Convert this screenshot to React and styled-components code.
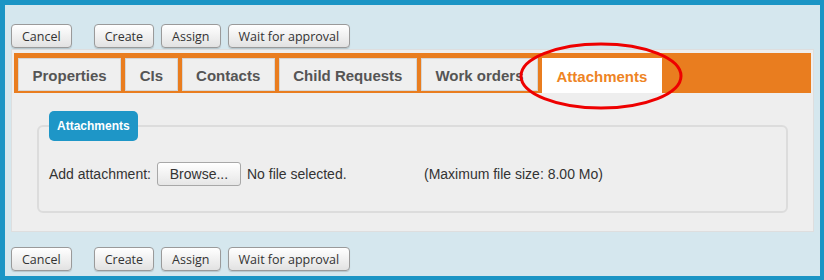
import React from 'react'
import styled, { createGlobalStyle } from 'styled-components'

const GlobalStyle = createGlobalStyle`
  html, body { margin: 0; padding: 0; background: #d5e7ee; }
  * { box-sizing: border-box; }
`

const Frame = styled.div`
  position: relative;
  width: 824px;
  height: 280px;
  background: #d5e7ee;
  border-style: solid;
  border-color: #1b95c5;
  border-width: 5px 4px 4px 5px;
  padding: 19px 6px 0 6px;
  font-family: "Liberation Sans", Arial, sans-serif;
  color: #333;
`

const ButtonBar = styled.div`
  display: flex;
  gap: 7px;
  height: 24px;
`

const ActionButton = styled.button`
  height: 24px;
  padding: 0 10px;
  margin-right: ${p => (p.$spaced ? '15px' : '0')};
  font-family: "Open Sans", "DejaVu Sans", sans-serif;
  font-size: 12.5px;
  color: #333;
  background: linear-gradient(#ffffff, #e2e2e2);
  border: 1px solid #9a9a9a;
  border-radius: 4px;
  box-shadow: 0 1px 1px rgba(0, 0, 0, 0.15);
  cursor: pointer;
`

const Panel = styled.div`
  margin: 1px 0 15px 0;
  width: 803px;
  height: 183px;
  background: #eeeeee;
  border: 1px solid #dedede;
  padding: 3px 2px 0 2px;
`

const TabBar = styled.div`
  display: flex;
  gap: 4px;
  height: 40px;
  background: #e97d1f;
  padding: 5px 4px 0 4px;
`

const Tab = styled.div`
  height: ${p => (p.$active ? '35px' : '33px')};
  padding: 1px ${p => (p.$active ? '14.5px' : '13.5px')} 0;
  display: flex;
  align-items: center;
  font-size: 15px;
  font-weight: bold;
  color: ${p => (p.$active ? '#ee8424' : '#555')};
  background: ${p => (p.$active ? '#ffffff' : '#efefef')};
  border: ${p => (p.$active ? 'none' : '1px solid #d6d6d6')};
`

const Content = styled.div`
  padding: 18px 23px 0 23px;
`

const Fieldset = styled.fieldset`
  margin: 0;
  height: 102px;
  padding: 0 10px 0 10px;
  border: 2px solid #dcdcdc;
  border-radius: 6px;
`

const Legend = styled.legend`
  height: 30px;
  padding: 0 8px;
  line-height: 30px;
  background: #1e96c7;
  color: #ffffff;
  font-size: 12px;
  font-weight: bold;
  border-radius: 5px;
`

const FileRow = styled.div`
  display: flex;
  align-items: center;
  margin-top: 21px;
  font-size: 14px;
`

const FileCell = styled.div`
  display: flex;
  align-items: center;
  gap: 6px;
  width: 375px;
`

const BrowseButton = styled.button`
  height: 24px;
  width: 84px;
  padding: 0;
  font-family: "Liberation Sans", Arial, sans-serif;
  font-size: 14px;
  color: #333;
  background: linear-gradient(#ffffff, #e6e6e6);
  border: 1px solid #a8a8a8;
  border-radius: 3px;
`

const Highlight = styled.svg`
  position: absolute;
  left: -5px;
  top: -5px;
  pointer-events: none;
`

const tabs = ['Properties', 'CIs', 'Contacts', 'Child Requests', 'Work orders', 'Attachments']

const Buttons = () => (
  <ButtonBar>
    <ActionButton $spaced>Cancel</ActionButton>
    <ActionButton>Create</ActionButton>
    <ActionButton>Assign</ActionButton>
    <ActionButton>Wait for approval</ActionButton>
  </ButtonBar>
)

export default function App() {
  return (
    <>
      <GlobalStyle />
      <Frame>
        <Buttons />
        <Panel>
          <TabBar>
            {tabs.map(t => (
              <Tab key={t} $active={t === 'Attachments'}>{t}</Tab>
            ))}
          </TabBar>
          <Content>
            <Fieldset>
              <Legend>Attachments</Legend>
              <FileRow>
                <FileCell>
                  <span>Add attachment:</span>
                  <BrowseButton>Browse...</BrowseButton>
                  <span>No file selected.</span>
                </FileCell>
                <span>(Maximum file size: 8.00 Mo)</span>
              </FileRow>
            </Fieldset>
          </Content>
        </Panel>
        <Buttons />
        <Highlight width="824" height="280" viewBox="0 0 824 280">
          <ellipse cx="601" cy="76" rx="80" ry="32" fill="none" stroke="#ee0000" strokeWidth="3" />
        </Highlight>
      </Frame>
    </>
  )
}
